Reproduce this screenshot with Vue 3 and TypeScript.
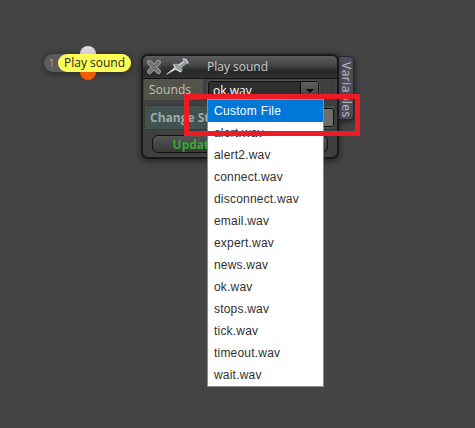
<script setup lang="ts">
import { ref } from 'vue'

const sounds: string[] = [
  'Custom File', 'alert.wav', 'alert2.wav', 'connect.wav', 'disconnect.wav',
  'email.wav', 'expert.wav', 'news.wav', 'ok.wav', 'stops.wav',
  'tick.wav', 'timeout.wav', 'wait.wav',
]
const highlighted = ref(0)
const current = ref('ok.wav')
</script>

<template>
  <main class="canvas">
    <div class="node">
      <span class="port port-in"></span>
      <span class="port port-out"></span>
      <span class="node-index">1</span>
      <span class="node-label">Play sound</span>
    </div>

    <div class="window">
      <section class="panel">
        <header class="titlebar">
          <svg class="close" width="16" height="16" viewBox="0 0 16 16">
            <path d="M3.6 3.4 L12.4 12.6 M12.4 3.4 L3.6 12.6" stroke="#9c9c9c" stroke-width="5" stroke-linecap="round" />
            <path d="M3.6 3.4 L12.4 12.6 M12.4 3.4 L3.6 12.6" stroke="#707070" stroke-width="3" stroke-linecap="round" />
          </svg>
          <svg class="pin" width="24" height="18" viewBox="0 0 24 18">
            <path d="M0.5 16.3 L9 9.4 L10.4 11 Z" fill="#e2e6e8" stroke="#d0d5d8" stroke-width=".7" />
            <path d="M7.2 6.2 C9 5.3 11 5.5 12.6 6.1 L17.2 3.2 L16.2 1 C17.2 -.1 18.6 -.1 20 .7 C22 2 23 4 22.6 5.8 L19.8 6.2 L15.8 9.8 C17 11.5 16.8 13.2 15.3 14.2 C11.8 13.6 8.2 10.6 7.2 6.2 Z" fill="#949da2" />
            <path d="M7.6 6.4 C8.8 9.8 11.5 12.8 15 13.8 M12.5 7.2 L18 3.4 M17 1 C19 1 21 2.6 22 5" fill="none" stroke="#d3dadd" stroke-width="1.2" />
          </svg>
          <h1>Play sound</h1>
        </header>
        <div class="row row-sounds">
          <label>Sounds</label>
          <div class="select">
            <span>{{ current }}</span>
            <i class="arrow"></i>
          </div>
          <span class="slot"></span>
        </div>
        <div class="row row-status">
          <span class="status-label">Change St</span>
          <span class="status-value"></span>
        </div>
        <footer class="actions">
          <button class="update">Update</button>
          <button></button>
        </footer>
      </section>
      <aside class="tab">Variables</aside>
    </div>

    <ul class="menu">
      <li v-for="(sound, i) in sounds" :key="sound" :class="{ active: i === highlighted }">{{ sound }}</li>
    </ul>
    <div class="callout"></div>
  </main>
</template>

<style>
body { background: #444; overflow: hidden; }
</style>

<style scoped>
* { box-sizing: border-box; }
.canvas {
  position: relative;
  width: 475px;
  height: 428px;
  overflow: hidden;
  background: #444;
  font-family: "Open Sans", "Noto Sans", sans-serif;
}
.node {
  position: absolute;
  left: 44px;
  top: 54px;
  display: flex;
  width: 87px;
  height: 18px;
  border-radius: 9px;
  background: #5c5c5c;
  box-shadow: 0 1px 7px rgba(0, 0, 0, .5);
}
.port {
  position: absolute;
  left: 36px;
  width: 16px;
  height: 16px;
  border-radius: 50%;
}
.port-in { top: -8px; background: linear-gradient(#e5dce6, #c5b8c7); }
.port-out { top: 10px; background: #f45b00; }
.node-index {
  width: 14px;
  padding-left: 1px;
  font-size: 10px;
  line-height: 18px;
  text-align: center;
  color: #a8a8a8;
}
.node-label {
  position: relative;
  width: 73px;
  border-radius: 9px;
  background: #ffff55;
  color: #252525;
  font-size: 12px;
  line-height: 18px;
  text-align: center;
  white-space: nowrap;
}
.window {
  position: absolute;
  left: 141px;
  top: 54px;
  z-index: 0;
  display: flex;
  align-items: flex-start;
}
.panel {
  position: relative;
  z-index: 1;
  width: 198px;
  height: 105px;
  border: 2px solid #191919;
  border-radius: 7px;
  background: #404040;
  box-shadow: 0 1px 7px rgba(0, 0, 0, .6);
  overflow: hidden;
}
.titlebar {
  display: flex;
  height: 23px;
  padding: 1px 0 0 3px;
  border-bottom: 1px solid #151515;
  background: linear-gradient(#5c5c5c 0, #484848 38%, #282828 68%, #303030);
}
.close { margin-top: 2px; fill: none; }
.pin { margin: 1px 0 0 4px; }
h1 {
  margin: 0 0 0 17px;
  color: #c8c8c8;
  font-size: 12px;
  font-weight: 400;
  line-height: 20px;
}
.row { display: flex; width: 190px; margin-left: 1px; }
.row-sounds { height: 21px; gap: 5px; }
label {
  width: 59px;
  padding-left: 5px;
  background: #53534b;
  color: #c0c0bd;
  font-size: 12px;
  line-height: 21px;
  letter-spacing: .1px;
}
.select {
  display: flex;
  justify-content: space-between;
  width: 111px;
  height: 20px;
  margin-top: 2px;
  border: 1px solid #111;
  border-radius: 3px 3px 0 0;
  background: #2e2e2e;
  box-shadow: 0 0 0 1px #515151;
  color: #fff;
  font-size: 12px;
  line-height: 17px;
}
.select span { padding-left: 4px; }
.arrow {
  display: grid;
  place-items: center;
  width: 18px;
  border-left: 1px solid #111;
  background: linear-gradient(#606060, #3c3c3c);
}
.arrow::after {
  content: "";
  border: 4px solid transparent;
  border-top-color: #0b0b0b;
  border-bottom: 0;
}
.slot {
  width: 11px;
  height: 12px;
  margin: 5px 0 0 -2px;
  border: 1px solid #383838;
}
.row-status {
  width: 191px;
  height: 25px;
  margin-top: 5px;
  justify-content: space-between;
  align-items: center;
  border: 1px solid #383d2c;
  background: #415351;
  padding: 0 0 0 5px;
}
.status-label {
  color: #9baaa8;
  font-size: 12px;
  font-weight: 700;
  line-height: 22px;
}
.status-value {
  width: 28px;
  height: 19px;
  border: 1px solid #101010;
  border-radius: 3px;
  background: #6e6e6e;
}
.actions {
  display: flex;
  gap: 2px;
  margin: 5px 0 0 9px;
}
button {
  width: 87px;
  height: 18px;
  padding: 0 2px 0 0;
  border: 1px solid #111;
  border-radius: 6px;
  background: linear-gradient(#555, #383838);
  font: 700 12px/15px "Open Sans", "Noto Sans", sans-serif;
}
.update { color: #32ac32; }
.tab {
  width: 16px;
  height: 64px;
  margin: 2px 0 0 -1px;
  padding-top: 5px;
  border: 1px solid #292932;
  border-radius: 0 5px 5px 0;
  background: linear-gradient(90deg, #555566, #4a4a58);
  box-shadow: 1px 2px 5px rgba(0, 0, 0, .5);
  color: #c0c0c9;
  font-size: 12px;
  letter-spacing: .5px;
  line-height: 14px;
  writing-mode: vertical-rl;
  white-space: nowrap;
}
.menu {
  position: absolute;
  left: 207px;
  top: 99px;
  z-index: 2;
  width: 117px;
  height: 288px;
  margin: 0;
  padding: 0;
  border: 1px solid #8b8b8b;
  background: #fff;
  list-style: none;
  color: #303030;
  font: 12px/22px "Liberation Sans", Arial, sans-serif;
  letter-spacing: .2px;
}
.menu li { height: 22px; padding-left: 6px; }
.menu .active { background: #0078d7; color: #fff; letter-spacing: .3px; }
.callout {
  position: absolute;
  left: 184px;
  top: 94px;
  z-index: 3;
  width: 176px;
  height: 42px;
  border: 5px solid #ed1c24;
}
</style>
